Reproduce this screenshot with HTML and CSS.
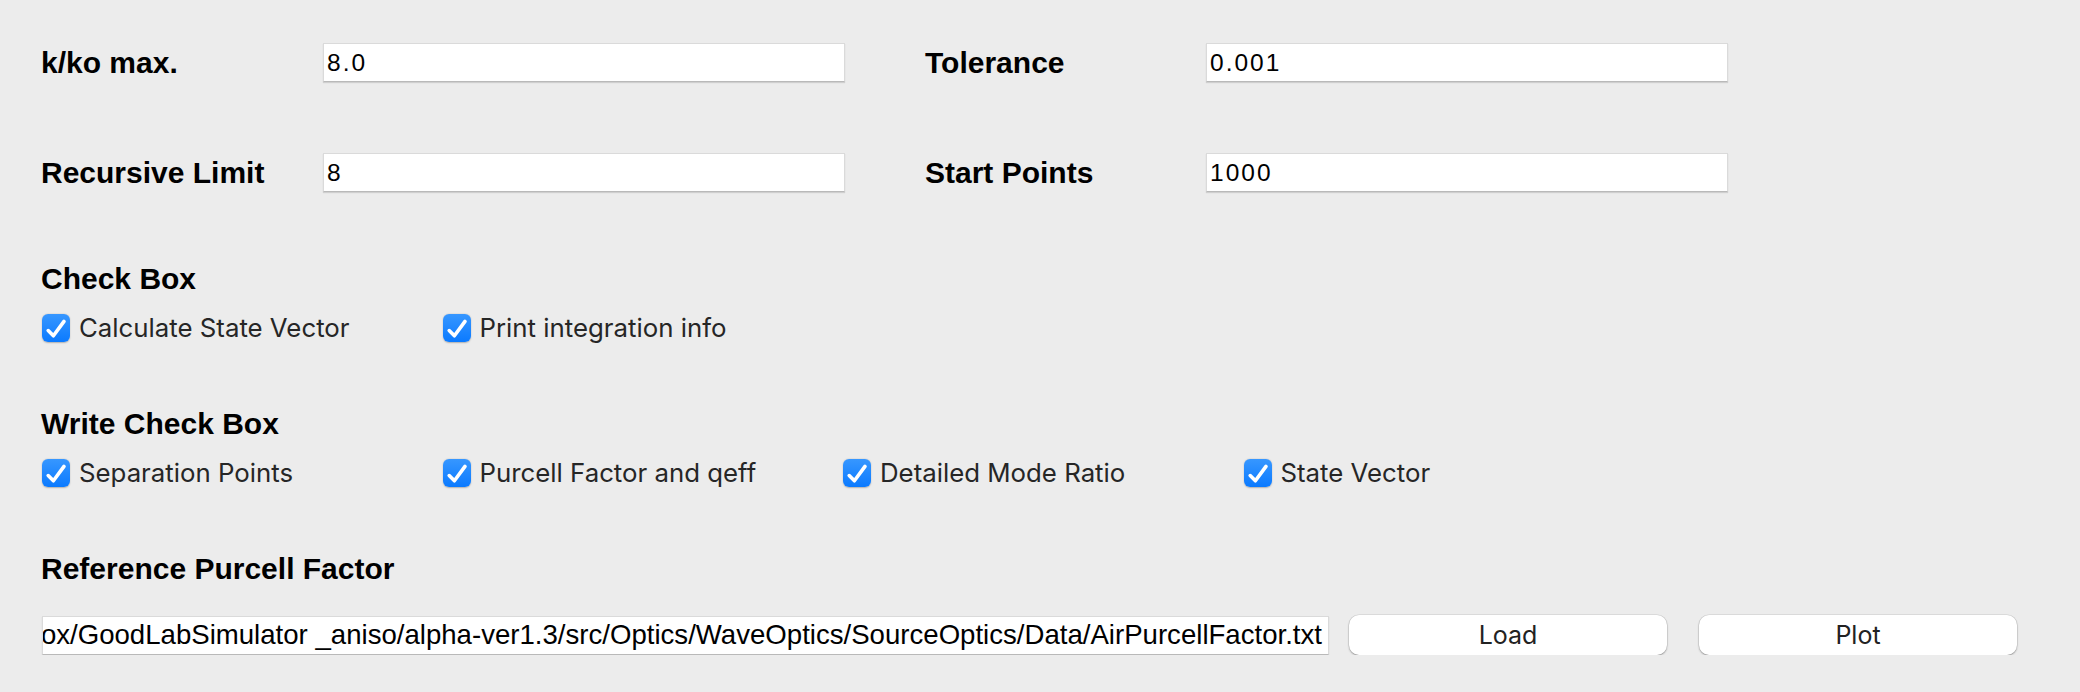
FILE: index.html
```html
<!DOCTYPE html>
<html lang="en">
<head>
<meta charset="utf-8">
<title>Simulator Settings</title>
<link rel="stylesheet" href="styles.css">
</head>
<body>
<main class="panel">
  <section class="params">
    <label class="plabel" for="kmax">k/ko max.</label>
    <input class="field" id="kmax" value="8.0">
    <label class="plabel right" for="tol">Tolerance</label>
    <input class="field" id="tol" value="0.001">
    <label class="plabel" for="rec">Recursive Limit</label>
    <input class="field" id="rec" value="8">
    <label class="plabel right" for="sp">Start Points</label>
    <input class="field" id="sp" value="1000">
  </section>

  <h2 class="heading">Check Box</h2>
  <div class="checks">
    <label class="check"><span class="box"><svg viewBox="0 0 28 28" width="28" height="28"><path d="M6.2 16.6 L11.4 21.8 L22 7.4" fill="none" stroke="#fff" stroke-width="3.6" stroke-linecap="round" stroke-linejoin="round"/></svg></span>Calculate State Vector</label>
    <label class="check"><span class="box"><svg viewBox="0 0 28 28" width="28" height="28"><path d="M6.2 16.6 L11.4 21.8 L22 7.4" fill="none" stroke="#fff" stroke-width="3.6" stroke-linecap="round" stroke-linejoin="round"/></svg></span>Print integration info</label>
  </div>

  <h2 class="heading second">Write Check Box</h2>
  <div class="checks">
    <label class="check"><span class="box"><svg viewBox="0 0 28 28" width="28" height="28"><path d="M6.2 16.6 L11.4 21.8 L22 7.4" fill="none" stroke="#fff" stroke-width="3.6" stroke-linecap="round" stroke-linejoin="round"/></svg></span>Separation Points</label>
    <label class="check"><span class="box"><svg viewBox="0 0 28 28" width="28" height="28"><path d="M6.2 16.6 L11.4 21.8 L22 7.4" fill="none" stroke="#fff" stroke-width="3.6" stroke-linecap="round" stroke-linejoin="round"/></svg></span>Purcell Factor and qeff</label>
    <label class="check"><span class="box"><svg viewBox="0 0 28 28" width="28" height="28"><path d="M6.2 16.6 L11.4 21.8 L22 7.4" fill="none" stroke="#fff" stroke-width="3.6" stroke-linecap="round" stroke-linejoin="round"/></svg></span>Detailed Mode Ratio</label>
    <label class="check"><span class="box"><svg viewBox="0 0 28 28" width="28" height="28"><path d="M6.2 16.6 L11.4 21.8 L22 7.4" fill="none" stroke="#fff" stroke-width="3.6" stroke-linecap="round" stroke-linejoin="round"/></svg></span>State Vector</label>
  </div>

  <h2 class="heading ref">Reference Purcell Factor</h2>
  <div class="filerow">
    <div class="field path"><span>Dropbox/GoodLabSimulator _aniso/alpha-ver1.3/src/Optics/WaveOptics/SourceOptics/Data/AirPurcellFactor.txt</span></div>
    <button class="btn" type="button">Load</button>
    <button class="btn plot" type="button">Plot</button>
  </div>
</main>
</body>
</html>
```
FILE: styles.css
```css
html, body {
  margin: 0;
  padding: 0;
  background: #ececec;
}

body {
  font-family: "Liberation Sans", Arial, sans-serif;
  color: #000;
}

.panel {
  padding: 43px 0 0 41px;
}

.params {
  display: grid;
  grid-template-columns: 282px 522px 80px 281px 522px;
  row-gap: 71px;
  align-items: center;
}

.plabel {
  font-family: "Liberation Sans", Arial, sans-serif;
  font-weight: bold;
  font-size: 30px;
  line-height: 36px;
  color: #000;
}

.plabel.right {
  grid-column: 4;
}

.field {
  box-sizing: border-box;
  height: 39px;
  margin: 0;
  padding: 0 3px;
  background: #fff;
  border: 1px solid #dadada;
  border-bottom: 1px solid #b9b9b9;
  border-radius: 0;
  box-shadow: 0 1px 1px rgba(0, 0, 0, 0.12);
  font-family: "Liberation Sans", Arial, sans-serif;
  font-size: 24.5px;
  letter-spacing: 2px;
  color: #000;
  outline: none;
}

.heading {
  margin: 69px 0 17px 0;
  font-family: "Liberation Sans", Arial, sans-serif;
  font-weight: bold;
  font-size: 30px;
  line-height: 36px;
}

.heading.second {
  margin-top: 64px;
}

.heading.ref {
  margin-top: 64px;
  margin-bottom: 28px;
}

.checks {
  display: grid;
  grid-template-columns: repeat(4, 400.5px);
}

.check {
  display: flex;
  align-items: center;
  gap: 9px;
  height: 28px;
  margin-left: 1px;
  font-family: Inter, "Noto Sans", sans-serif;
  font-size: 25.8px;
  line-height: 28px;
  color: #262626;
  white-space: nowrap;
}

.box {
  flex: none;
  width: 28px;
  height: 28px;
  border-radius: 6px;
  background: linear-gradient(180deg, #3797ff 0%, #0b7aff 100%);
  box-shadow: 0 0.5px 1.5px rgba(0, 0, 0, 0.25);
  display: flex;
}

.filerow {
  display: flex;
  align-items: center;
  gap: 20px;
}

.field.path {
  width: 1287px;
  margin-left: 1px;
  display: flex;
  justify-content: flex-end;
  align-items: center;
  overflow: hidden;
  white-space: nowrap;
  padding: 0 6px 0 0;
  font-size: 27.6px;
  letter-spacing: 0;
}

.field.path span {
  flex: none;
}

.btn {
  box-sizing: border-box;
  width: 318px;
  height: 40px;
  margin: 0;
  padding: 0;
  background: #fff;
  border: none;
  border-radius: 10px;
  box-shadow: 0 0 0 0.5px rgba(0, 0, 0, 0.12), 0 1px 2px rgba(0, 0, 0, 0.3);
  font-family: Inter, "Noto Sans", sans-serif;
  font-size: 25px;
  color: #222;
}

.btn.plot {
  margin-left: 12px;
}
```
